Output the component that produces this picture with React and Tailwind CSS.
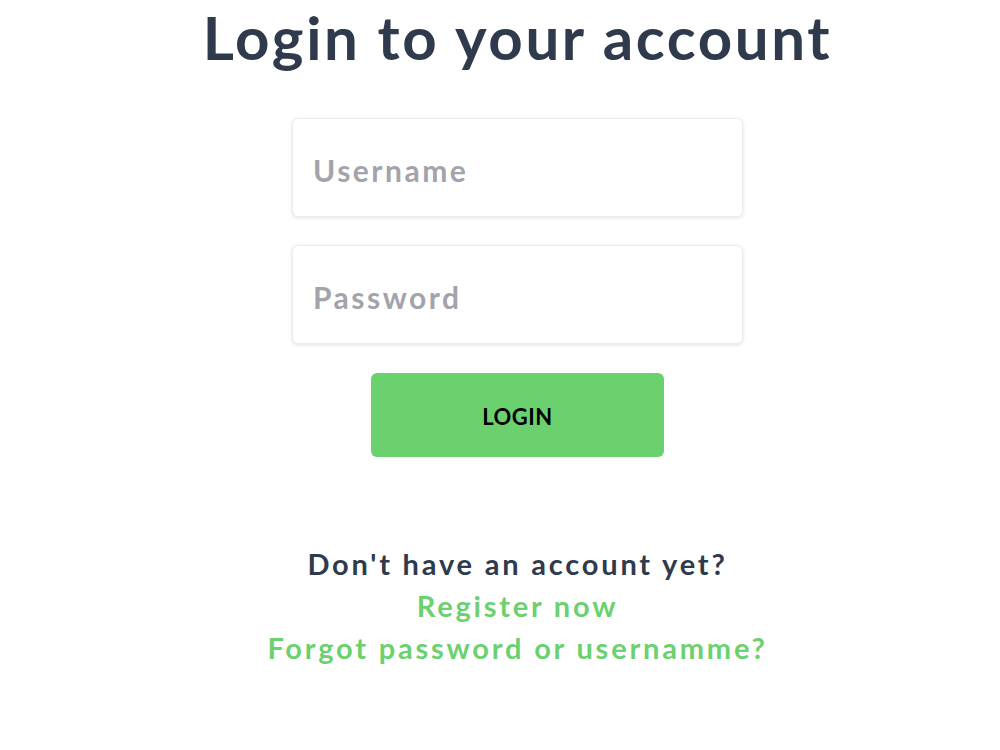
export default function App() {
    return (
        <div className="min-h-[750px] bg-white pl-[35px] font-['Lato','Noto_Sans',sans-serif]">
            <div className="flex flex-col items-center">
                {/* Title */}
                <h1 className="mt-[1px] text-[60px] leading-[72px] font-bold text-[#2f3b4c] tracking-[2.6px]">
                    Login to your account
                </h1>

                {/* Form */}
                <form className="mt-[45px] flex flex-col items-center" onSubmit={(e) => e.preventDefault()}>
                    <input
                        type="text"
                        placeholder="Username"
                        className="w-[451px] h-[99px] px-[20px] pt-[5px] rounded-md bg-white border border-[#ececec] shadow-[0_1px_4px_rgba(0,0,0,0.12)] text-[30px] font-bold tracking-[2.5px] text-[#2f3b4c] placeholder:text-[#a3a3ab] outline-none"
                    />
                    <input
                        type="password"
                        placeholder="Password"
                        className="mt-[28px] w-[451px] h-[99px] px-[20px] pt-[5px] rounded-md bg-white border border-[#ececec] shadow-[0_1px_4px_rgba(0,0,0,0.12)] text-[30px] font-bold tracking-[2.5px] text-[#2f3b4c] placeholder:text-[#a3a3ab] outline-none"
                    />
                    <button
                        type="submit"
                        className="mt-[29px] w-[293px] h-[84px] rounded-md bg-[#6bd16f] pt-[2px] text-[22px] font-bold tracking-[0.5px] text-black"
                    >
                        LOGIN
                    </button>
                </form>

                {/* Links */}
                <div className="mt-[86px] flex flex-col items-center text-[29px] font-bold leading-[42px] tracking-[2.8px]">
                    <p className="text-[#2f3b4c]">Don't have an account yet?</p>
                    <a href="#" className="text-[#6bd16f]">Register now</a>
                    <a href="#" className="text-[#6bd16f]">Forgot password or usernamme?</a>
                </div>
            </div>
        </div>
    );
}
